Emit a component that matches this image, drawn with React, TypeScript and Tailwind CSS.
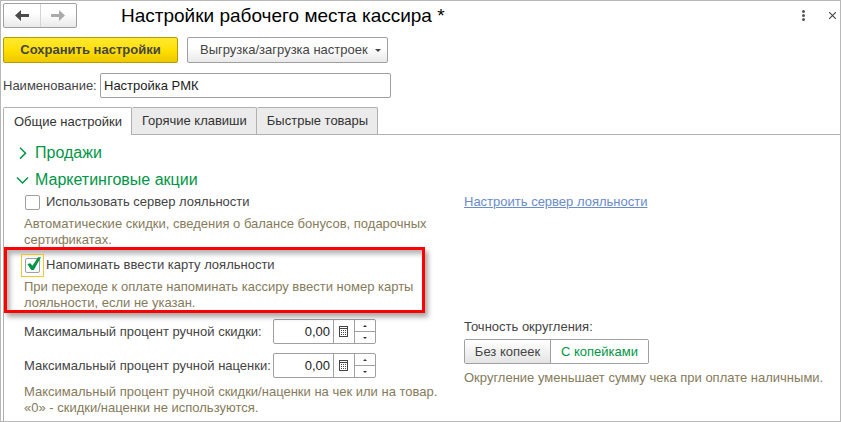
import { useState } from "react";
import clsx from "clsx";

const TABS = ["Общие настройки", "Горячие клавиши", "Быстрые товары"];

const raised = "border border-[#a0a0a0] bg-linear-to-b from-white from-40% to-[#e9e9e9]";

type CheckFieldProps = {
  label: string;
  checked: boolean;
  focused?: boolean;
  onChange: (value: boolean) => void;
};

const CheckField = ({ label, checked, focused, onChange }: CheckFieldProps) => (
  <label className="flex h-4 items-center gap-1.5 pl-px">
    <span className="relative h-[15px] w-[15px] shrink-0">
      {focused && <span className="pointer-events-none absolute -inset-1 border border-[#f0c52e]" />}
      <input
        type="checkbox"
        checked={checked}
        onChange={(e) => onChange(e.target.checked)}
        className="block h-[15px] w-[15px] appearance-none rounded-xs border border-[#a0a0a0] bg-white outline-none"
      />
      {checked && (
        <svg
          viewBox="0 0 15 15"
          className="pointer-events-none absolute inset-0 overflow-visible"
          fill="#009646"
        >
          <path d="M2.4 6 L5.4 5.2 L7.4 7.8 L13 -0.8 L16 -0.8 L8.8 12 L6.2 12 Z" />
        </svg>
      )}
    </span>
    {label}
  </label>
);

type SectionTitleProps = {
  title: string;
  open: boolean;
  onToggle: () => void;
};

const SectionTitle = ({ title, open, onToggle }: SectionTitleProps) => (
  <button
    type="button"
    aria-expanded={open}
    onClick={onToggle}
    className="-ml-2 flex h-5 items-center gap-1.5 text-base text-[#009646]"
  >
    <svg viewBox="0 0 13 13" className="h-[13px] w-[13px]" fill="none" stroke="currentColor" strokeWidth="1.5">
      <path d={open ? "M1 3.5 L6.5 9 L12 3.5" : "M4 0.8 L9.5 6.2 L4 11.6"} />
    </svg>
    {title}
  </button>
);

type PercentFieldProps = {
  id: string;
  label: string;
};

const PercentField = ({ id, label }: PercentFieldProps) => (
  <div className="flex items-center">
    <label htmlFor={id} className="w-[249px]">
      {label}
    </label>
    <div className="flex h-[25px] w-[103px] overflow-hidden rounded-xs border border-[#a0a0a0]">
      <input id={id} defaultValue="0,00" className="w-[59px] pr-[3px] text-right text-[#1c1c1c] outline-none" />
      <button
        type="button"
        aria-label="Калькулятор"
        className="flex w-[21px] items-center border-l border-[#a0a0a0] pl-[5px]"
      >
        <svg viewBox="0 0 9 11" className="h-[11px] w-[9px]" fill="none" stroke="#444">
          <rect x="0.5" y="0.5" width="8" height="10" />
          <path d="M1 2.5h7M2 4.5h1M4 4.5h1M6 4.5h1M2 6.5h1M4 6.5h1M6 6.5h1M2 8.5h1M4 8.5h1M6 8.5h1" />
        </svg>
      </button>
      <div className="flex flex-1 flex-col border-l border-[#a0a0a0]">
        <button type="button" aria-label="Больше" className="flex h-3 items-center justify-center border-b border-[#a0a0a0]">
          <svg viewBox="0 0 4 2" className="h-[2px] w-1" fill="#333">
            <path d="M0 2 L2 0 L4 2Z" />
          </svg>
        </button>
        <button type="button" aria-label="Меньше" className="flex flex-1 items-center justify-center">
          <svg viewBox="0 0 4 2" className="h-[2px] w-1" fill="#333">
            <path d="M0 0 L2 2 L4 0Z" />
          </svg>
        </button>
      </div>
    </div>
  </div>
);

const Hint = ({ children }: { children: React.ReactNode }) => (
  <p className="leading-4 text-[#857b5b]">{children}</p>
);

const App = () => {
  const [tab, setTab] = useState(0);
  const [salesOpen, setSalesOpen] = useState(false);
  const [promoOpen, setPromoOpen] = useState(true);
  const [useServer, setUseServer] = useState(false);
  const [remindCard, setRemindCard] = useState(true);
  const [rounding, setRounding] = useState("С копейками");

  return (
    <div className="flex min-h-screen flex-col border border-[#b8b8b8] bg-white pt-0.5 pl-0.5 font-['Liberation_Sans',Arial,sans-serif] text-[13px] leading-4 text-[#444]">
      <header className="flex h-[25px] items-center">
        <div className={clsx("flex h-[25px] w-[74px] rounded-xs", raised)}>
          <button type="button" aria-label="Назад" className="flex flex-1 items-center justify-center">
            <svg viewBox="0 0 14 11" className="h-[11px] w-[14px]" fill="#4a4a4a">
              <path d="M0 5.5L6 0V4H14V7H6V11Z" />
            </svg>
          </button>
          <button
            type="button"
            aria-label="Вперед"
            className="flex flex-1 items-center justify-center border-l border-[#d4d4d4]"
          >
            <svg viewBox="0 0 14 11" className="h-[11px] w-[14px]" fill="#aaa">
              <path d="M14 5.5L8 0V4H0V7H8V11Z" />
            </svg>
          </button>
        </div>
        <h1 className="ml-11 flex-1 text-[19px] leading-6 text-black">Настройки рабочего места кассира *</h1>
        <button type="button" aria-label="Ещё" className="mr-6">
          <svg viewBox="0 0 3 11" className="h-[11px] w-[3px]" fill="#555">
            <circle cx="1.5" cy="1.5" r="1.5" />
            <circle cx="1.5" cy="5.5" r="1.5" />
            <circle cx="1.5" cy="9.5" r="1.5" />
          </svg>
        </button>
        <button type="button" aria-label="Закрыть" className="mr-1">
          <svg viewBox="0 0 7 7" className="h-[7px] w-[7px]" stroke="#444" strokeWidth="1.1">
            <path d="M0 0L7 7M7 0L0 7" />
          </svg>
        </button>
      </header>

      <div className="mt-[9px] flex gap-[9px]">
        <button
          type="button"
          className="h-[26px] w-[175px] rounded-xs border border-[#b39b00] bg-linear-to-b from-[#ffe92e] via-[#ffe000] to-[#ecc800] font-bold"
        >
          Сохранить настройки
        </button>
        <button
          type="button"
          className={clsx("flex h-[26px] w-[201px] items-center justify-between rounded-xs pr-1.5 pl-3", raised)}
        >
          Выгрузка/загрузка настроек
          <svg viewBox="0 0 6 3" className="h-[3px] w-1.5" fill="#444">
            <path d="M0 0H6L3 3Z" />
          </svg>
        </button>
      </div>

      <div className="mt-2.5 flex items-center">
        <label htmlFor="name" className="w-[97px]">
          Наименование:
        </label>
        <input
          id="name"
          defaultValue="Настройка РМК"
          className="h-[25px] w-[291px] rounded-xs border border-[#a0a0a0] px-[3px] text-[#1c1c1c] outline-none"
        />
      </div>

      <div role="tablist" className="mt-[9px] flex h-7 items-end border-b border-[#b0b0b0]">
        {TABS.map((name, i) => (
          <button
            key={name}
            type="button"
            role="tab"
            aria-selected={tab === i}
            onClick={() => setTab(i)}
            className={clsx(
              "rounded-t-xs border-t border-r border-[#b0b0b0] pr-[9px] pl-2.5 text-[#333]",
              i === 0 && "border-l",
              tab === i ? "-mb-px h-7 bg-white" : "h-[27px] bg-[#ebebeb]",
            )}
          >
            {name}
          </button>
        ))}
      </div>

      <main className="flex-1 border-l border-[#b0b0b0] pt-2 pb-1 pl-5">
        <SectionTitle title="Продажи" open={salesOpen} onToggle={() => setSalesOpen(!salesOpen)} />
        <div className="mt-[7px]">
          <SectionTitle title="Маркетинговые акции" open={promoOpen} onToggle={() => setPromoOpen(!promoOpen)} />
        </div>

        {promoOpen && (
          <div className="mt-1 grid grid-cols-[440px_1fr]">
            <div>
              <CheckField label="Использовать сервер лояльности" checked={useServer} onChange={setUseServer} />
              <div className="mt-1.5">
                <Hint>
                  Автоматические скидки, сведения о балансе бонусов, подарочных
                  <br />
                  сертификатах.
                </Hint>
              </div>

              <div className="relative mt-[9px]">
                <div className="pointer-events-none absolute -top-2.5 right-[39px] -bottom-0.5 -left-5 border-3 border-[#ff0000] shadow-[3px_4px_5px_rgba(0,0,0,0.35),inset_3px_4px_5px_rgba(0,0,0,0.3)]" />
                <CheckField
                  label="Напоминать ввести карту лояльности"
                  checked={remindCard}
                  focused
                  onChange={setRemindCard}
                />
                <div className="mt-1.5">
                  <Hint>
                    При переходе к оплате напоминать кассиру ввести номер карты
                    <br />
                    лояльности, если не указан.
                  </Hint>
                </div>
              </div>
            </div>

            <div>
              <a href="#server" className="text-[#6a8cc8] underline">
                Настроить сервер лояльности
              </a>
            </div>

            <div className="mt-2">
              <PercentField id="discount" label="Максимальный процент ручной скидки:" />
              <div className="mt-[9px]">
                <PercentField id="markup" label="Максимальный процент ручной наценки:" />
              </div>
              <div className="mt-1.5">
                <Hint>
                  Максимальный процент ручной скидки/наценки на чек или на товар.
                  <br />
                  «0» - скидки/наценки не используются.
                </Hint>
              </div>
            </div>

            <fieldset className="mt-2">
              <legend>Точность округления:</legend>
              <div className="mt-1 flex h-[25px] w-[185px] overflow-hidden rounded-xs border border-[#a0a0a0]">
                {["Без копеек", "С копейками"].map((name, i) => (
                  <label
                    key={name}
                    className={clsx(
                      "relative flex items-center justify-center",
                      i === 0 ? "w-[85px]" : "flex-1 border-l border-[#a0a0a0]",
                      rounding === name ? "bg-white text-[#009646]" : "bg-linear-to-b from-white to-[#e4e4e4]",
                    )}
                  >
                    <input
                      type="radio"
                      name="rounding"
                      checked={rounding === name}
                      onChange={() => setRounding(name)}
                      className="absolute inset-0 appearance-none"
                    />
                    {name}
                  </label>
                ))}
              </div>
              <div className="mt-1.5">
                <Hint>Округление уменьшает сумму чека при оплате наличными.</Hint>
              </div>
            </fieldset>
          </div>
        )}
      </main>
    </div>
  );
};

export default App;
